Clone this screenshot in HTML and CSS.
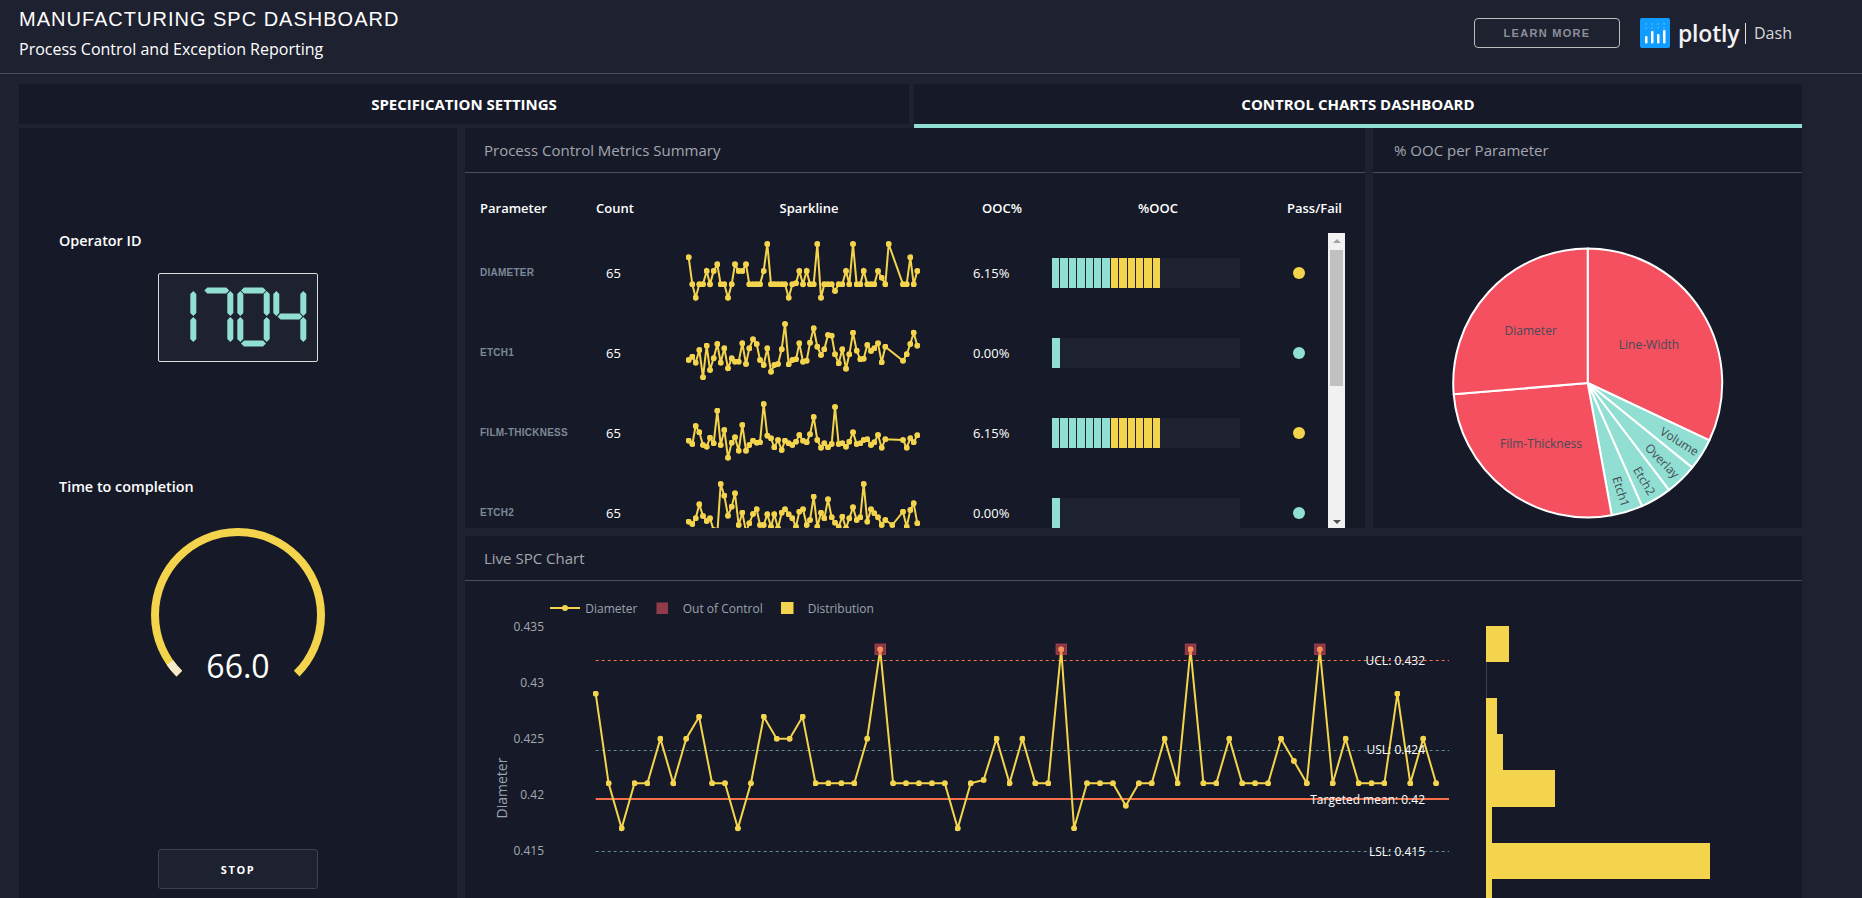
FILE: index.html
```html
<!DOCTYPE html>
<html lang="en">
<head>
<meta charset="utf-8">
<title>Manufacturing SPC Dashboard</title>
<link rel="stylesheet" href="styles.css">
</head>
<body>
<header class="banner">
  <div class="banner-text">
    <h1 class="banner-title">MANUFACTURING SPC DASHBOARD</h1>
    <p class="banner-sub">Process Control and Exception Reporting</p>
  </div>
  <div class="banner-actions">
    <button class="learn">LEARN MORE</button>
    <div class="logo">
      <svg class="logo-mark" width="30" height="30" viewBox="0 0 30 30">
        <rect width="30" height="30" rx="2" fill="#119dff"/>
        <g fill="#fff" opacity=".22"><circle cx="6" cy="6" r="1"/><circle cx="12" cy="6" r="1"/><circle cx="18" cy="6" r="1"/><circle cx="24" cy="6" r="1"/><circle cx="6" cy="10" r="1"/><circle cx="12" cy="10" r="1"/><circle cx="18" cy="10" r="1"/><circle cx="24" cy="10" r="1"/></g>
        <g fill="#fff"><rect x="5" y="18" width="2.5" height="7.5" rx="1"/><rect x="11" y="13" width="2.5" height="12.5" rx="1"/><rect x="17" y="16" width="2.5" height="9.5" rx="1"/><rect x="23" y="12" width="2.5" height="13.5" rx="1"/></g>
      </svg>
      <span class="logo-word">plotly</span>
      <span class="logo-sep"></span>
      <span class="logo-dash">Dash</span>
    </div>
  </div>
</header>

<nav class="tabs">
  <div class="tab">SPECIFICATION SETTINGS</div>
  <div class="tab tab-active">CONTROL CHARTS DASHBOARD</div>
</nav>

<main class="content">
  <aside class="side">
    <div class="side-label side-label-first">Operator ID</div>
    <div class="led">
      <svg width="158" height="87" viewBox="159 274 158 87" role="img" aria-label="1704">
        <title>1704</title>
        <defs>
          <polygon id="sv" points="0,0 3,3 3,22 0,25 -3,22 -3,3"/>
          <polygon id="sh" points="0,0 3,-3 22,-3 25,0 22,3 3,3"/>
        </defs>
        <g fill="#91dfd2">
          <use href="#sv" x="193.3" y="291"/><use href="#sv" x="193.3" y="317"/>
          <use href="#sh" x="204.3" y="290.5"/><use href="#sv" x="230.3" y="291"/><use href="#sv" x="230.3" y="317"/>
          <use href="#sv" x="240.3" y="291"/><use href="#sv" x="240.3" y="317"/><use href="#sv" x="266.7" y="291"/><use href="#sv" x="266.7" y="317"/><use href="#sh" x="241" y="290.5"/><use href="#sh" x="241" y="343.5"/>
          <use href="#sv" x="276.3" y="291"/><use href="#sv" x="303.3" y="291"/><use href="#sv" x="303.3" y="317"/><use href="#sh" x="277.5" y="316.5"/>
        </g>
      </svg>
    </div>
    <div class="side-label side-label-second">Time to completion</div>
    <svg class="gauge" width="180" height="170" viewBox="148 521 180 170">
      <path d="M179.31 674.69 A83 83 0 1 1 296.69 674.69" fill="none" stroke="#f4d44d" stroke-width="8"/>
      <path d="M179.31 674.69 A83 83 0 0 1 170 663.6" fill="none" stroke="#f8ebc9" stroke-width="8"/>
      <text class="gauge-value" x="238" y="679" text-anchor="middle">66.0</text>
    </svg>
    <button class="stop">STOP</button>
  </aside>

  <div class="board">
    <div class="board-top">
      <section class="panel panel-metrics">
        <h2 class="panel-title">Process Control Metrics Summary</h2>
        <div class="metric-table">
          <div class="metric-grid metric-head">
            <div class="h-param">Parameter</div>
            <div class="h-count">Count</div>
            <div class="h-spark">Sparkline</div>
            <div class="h-ooc">OOC%</div>
            <div class="h-bar">%OOC</div>
            <div class="h-pass">Pass/Fail</div>
          </div>
          <div class="metric-scroll">
            <div class="metric-rows">
              <div class="metric-grid metric-row">
                <div class="c-param">DIAMETER</div>
                <div class="c-count">65</div>
                <svg class="spark" width="322" height="80" viewBox="564 159 966 240"><polyline class="spark-line" marker-start="url(#sd)" marker-mid="url(#sd)" marker-end="url(#sd)" points="686,232 697,313 707,353 718,313 729,313 740,273 750,313 761,273 772,253 782,313 793,313 804,353 815,313 825,253 836,273 847,273 858,253 868,313 879,313 890,313 900,313 911,273 922,192 933,313 943,313 954,313 965,313 975,313 986,353 997,313 1008,310 1018,273 1029,313 1040,273 1050,313 1061,313 1072,192 1083,353 1093,313 1104,313 1115,313 1125,333 1136,313 1147,313 1158,273 1168,313 1179,192 1190,313 1201,313 1211,273 1222,313 1233,313 1243,313 1254,273 1265,293 1276,313 1286,192 1329,313 1340,313 1351,232 1361,313 1372,273"/><defs><marker id="sd" markerUnits="userSpaceOnUse" markerWidth="18" markerHeight="18" refX="9" refY="9" viewBox="0 0 18 18"><circle cx="9" cy="9" r="9" fill="#f4d44d"/></marker></defs></svg>
                <div class="c-ooc">6.15%</div>
                <div class="track"><i class="seg"></i><i class="seg"></i><i class="seg"></i><i class="seg"></i><i class="seg"></i><i class="seg"></i><i class="seg"></i><i class="seg seg-y"></i><i class="seg seg-y"></i><i class="seg seg-y"></i><i class="seg seg-y"></i><i class="seg seg-y"></i><i class="seg seg-y"></i></div>
                <div class="dot dot-y"></div>
              </div>
              <div class="metric-grid metric-row">
                <div class="c-param">ETCH1</div>
                <div class="c-count">65</div>
                <svg class="spark" width="322" height="80" viewBox="564 399 966 240"><polyline class="spark-line" marker-start="url(#sd)" marker-mid="url(#sd)" marker-end="url(#sd)" points="686,540 697,530 707,548 718,510 729,592 740,497 750,570 761,535 772,492 782,548 793,505 804,565 815,535 825,545 836,545 847,490 858,552 868,505 879,478 890,492 900,540 911,555 922,505 933,575 943,555 954,552 965,508 975,432 986,553 997,540 1008,538 1018,490 1029,545 1040,542 1050,488 1061,445 1072,500 1083,525 1093,508 1104,465 1115,467 1125,523 1136,550 1147,508 1158,566 1168,523 1179,458 1190,512 1201,538 1211,536 1222,495 1233,513 1243,505 1254,490 1265,547 1276,500 1329,542 1340,523 1351,492 1361,458 1372,497"/></svg>
                <div class="c-ooc">0.00%</div>
                <div class="track"><i class="seg seg-solo"></i></div>
                <div class="dot"></div>
              </div>
              <div class="metric-grid metric-row">
                <div class="c-param">FILM-THICKNESS</div>
                <div class="c-count">65</div>
                <svg class="spark" width="322" height="80" viewBox="564 639 966 240"><polyline class="spark-line" marker-start="url(#sd)" marker-mid="url(#sd)" marker-end="url(#sd)" points="686,782 697,792 707,738 718,757 729,795 740,800 750,773 761,790 772,692 782,795 793,750 804,833 815,788 825,772 836,812 847,735 858,812 868,795 879,782 890,788 900,787 911,672 922,767 933,775 943,802 954,780 965,810 975,782 986,790 997,795 1008,785 1018,765 1029,782 1040,787 1050,763 1061,711 1072,780 1083,803 1093,790 1104,802 1115,792 1125,681 1136,792 1147,790 1158,800 1168,785 1179,757 1190,792 1201,790 1211,780 1222,778 1233,795 1243,787 1254,765 1265,803 1276,778 1329,780 1340,803 1351,775 1361,787 1372,766"/></svg>
                <div class="c-ooc">6.15%</div>
                <div class="track"><i class="seg"></i><i class="seg"></i><i class="seg"></i><i class="seg"></i><i class="seg"></i><i class="seg"></i><i class="seg"></i><i class="seg seg-y"></i><i class="seg seg-y"></i><i class="seg seg-y"></i><i class="seg seg-y"></i><i class="seg seg-y"></i><i class="seg seg-y"></i></div>
                <div class="dot dot-y"></div>
              </div>
              <div class="metric-grid metric-row">
                <div class="c-param">ETCH2</div>
                <div class="c-count">65</div>
                <svg class="spark" width="322" height="80" viewBox="564 879 966 240"><polyline class="spark-line" marker-start="url(#sd)" marker-mid="url(#sd)" marker-end="url(#sd)" points="686,1025 697,1032 707,1015 718,973 729,1008 740,1023 750,1015 761,1050 772,1060 782,912 793,947 804,1007 815,980 825,940 836,1035 847,998 858,1055 868,1030 879,1002 890,988 900,1035 911,1035 922,1003 933,1040 943,1003 954,1045 965,998 975,988 986,1003 997,1015 1008,1040 1018,995 1029,988 1040,1035 1050,1020 1061,950 1072,1040 1083,998 1093,1015 1104,958 1115,1012 1125,1028 1136,1040 1147,1010 1158,1045 1168,1015 1179,982 1190,1020 1201,1012 1211,912 1222,1025 1233,988 1243,1000 1254,1012 1265,1035 1276,1020 1297,1035 1329,995 1340,1040 1351,990 1361,970 1372,1030"/></svg>
                <div class="c-ooc">0.00%</div>
                <div class="track"><i class="seg seg-solo"></i></div>
                <div class="dot"></div>
              </div>
            </div>
            <div class="scrollbar">
              <span class="sb-up"></span>
              <span class="sb-thumb"></span>
              <span class="sb-down"></span>
            </div>
          </div>
        </div>
      </section>

      <section class="panel panel-pie">
        <h2 class="panel-title panel-title-pie">% OOC per Parameter</h2>
        <svg class="pie" width="429" height="355" viewBox="1373 173 429 355">
          <g stroke="#fff" stroke-width="2" stroke-linejoin="round">
            <path fill="#f45060" d="M1587.7 383 L1587.7 248.5 A134.5 134.5 0 0 1 1709.4 440.3 Z"/>
            <path fill="#91dfd2" d="M1587.7 383 L1709.4 440.3 A134.5 134.5 0 0 1 1692.2 467.6 Z"/>
            <path fill="#91dfd2" d="M1587.7 383 L1692.2 467.6 A134.5 134.5 0 0 1 1669 490.1 Z"/>
            <path fill="#91dfd2" d="M1587.7 383 L1669 490.1 A134.5 134.5 0 0 1 1642 506.1 Z"/>
            <path fill="#91dfd2" d="M1587.7 383 L1642 506.1 A134.5 134.5 0 0 1 1611.7 515.3 Z"/>
            <path fill="#f45060" d="M1587.7 383 L1611.7 515.3 A134.5 134.5 0 0 1 1453.7 394.3 Z"/>
            <path fill="#f45060" d="M1587.7 383 L1453.7 394.3 A134.5 134.5 0 0 1 1587.7 248.5 Z"/>
          </g>
          <g class="pie-label" text-anchor="middle">
            <text x="1649" y="349">Line-Width</text>
            <text x="1530.7" y="335">Diameter</text>
            <text x="1541" y="448">Film-Thickness</text>
            <text transform="translate(1679.3 441.7) rotate(32)" y="4">Volume</text>
            <text transform="translate(1662 461) rotate(46)" y="4">Overlay</text>
            <text transform="translate(1644 481) rotate(59.5)" y="4">Etch2</text>
            <text transform="translate(1620.7 491.7) rotate(73)" y="4">Etch1</text>
          </g>
        </svg>
      </section>
    </div>

    <section class="panel panel-live">
      <h2 class="panel-title">Live SPC Chart</h2>
      <svg class="live" width="1337" height="317" viewBox="465 581 1337 317">
        <defs><marker id="md" markerUnits="userSpaceOnUse" markerWidth="6" markerHeight="6" refX="3" refY="3" viewBox="0 0 6 6"><circle cx="3" cy="3" r="3" fill="#f4d44d"/></marker></defs>
        <g class="legend">
          <line x1="550" y1="608" x2="580" y2="608" stroke="#f4d44d" stroke-width="2"/>
          <circle cx="565" cy="608" r="3" fill="#f4d44d"/>
          <text x="585.3" y="613">Diameter</text>
          <rect x="656.5" y="602.5" width="11.5" height="11.5" fill="#913a4a"/>
          <text x="682.7" y="613">Out of Control</text>
          <rect x="781" y="602" width="12.5" height="12" fill="#f4d44d"/>
          <text x="807.7" y="613">Distribution</text>
        </g>
        <g class="tick" text-anchor="end">
          <text x="544" y="631">0.435</text>
          <text x="544" y="687">0.43</text>
          <text x="544" y="743">0.425</text>
          <text x="544" y="799">0.42</text>
          <text x="544" y="855">0.415</text>
        </g>
        <text class="axis-title" transform="translate(507 788) rotate(-90)" text-anchor="middle">Diameter</text>
        <g fill="none">
          <line x1="595.7" y1="660.5" x2="1449" y2="660.5" stroke="#f8704a" stroke-dasharray="3 3"/>
          <line x1="595.7" y1="750.5" x2="1449" y2="750.5" stroke="#91dfd2" stroke-opacity=".6" stroke-dasharray="3 3"/>
          <line x1="595.7" y1="851.5" x2="1449" y2="851.5" stroke="#91dfd2" stroke-opacity=".6" stroke-dasharray="3 3"/>
          <line x1="595.7" y1="799" x2="1449" y2="799" stroke="#f8704a" stroke-width="2"/>
          <polyline stroke="#f4d44d" stroke-width="2" marker-start="url(#md)" marker-mid="url(#md)" marker-end="url(#md)" points="595.7,693.7 608.6,783.3 621.6,828.3 634.5,783.3 647.4,783.3 660.4,738.7 673.3,783.3 686.2,738.7 699.1,716.7 712.1,783.3 725,783.3 737.9,828.3 750.9,783.3 763.8,716.7 776.7,738.7 789.6,738.7 802.6,716.7 815.5,783.3 828.4,783.3 841.4,783.3 854.3,783.3 867.2,738.7 880.2,649.3 893.1,783.3 906,783.3 918.9,783.3 931.9,783.3 944.8,783.3 957.7,828.3 970.7,783.3 983.6,780 996.5,738.7 1009.5,783.3 1022.4,738.7 1035.3,783.3 1048.2,783.3 1061.2,649.3 1074.1,828.3 1087,783.3 1100,783.3 1112.9,783.3 1125.8,805.7 1138.8,783.3 1151.7,783.3 1164.6,738.7 1177.5,783.3 1190.5,649.3 1203.4,783.3 1216.3,783.3 1229.3,738.7 1242.2,783.3 1255.1,783.3 1268.1,783.3 1281,738.7 1293.9,761 1306.8,783.3 1319.8,649.3 1332.7,783.3 1345.6,738.7 1358.6,783.3 1371.5,783.3 1384.4,783.3 1397.4,693.7 1410.3,783.3 1423.2,738.7 1436.1,783.3"/>
        </g>
        <g fill="#f45060" fill-opacity=".5" stroke="#f45060" stroke-opacity=".5">
          <rect x="875" y="644" width="10.5" height="10.5"/>
          <rect x="1056" y="644" width="10.5" height="10.5"/>
          <rect x="1185.3" y="644" width="10.5" height="10.5"/>
          <rect x="1314.6" y="644" width="10.5" height="10.5"/>
        </g>
        <g class="limit" text-anchor="end">
          <text x="1425" y="664.5">UCL: 0.432</text>
          <text x="1425" y="754">USL: 0.424</text>
          <text x="1425" y="804">Targeted mean: 0.42</text>
          <text x="1425" y="855.5">LSL: 0.415</text>
        </g>
        <line x1="1486.5" y1="662" x2="1486.5" y2="698" stroke="#3c4152"/>
        <g fill="#f4d44d">
          <rect x="1486" y="626" width="23" height="36"/>
          <rect x="1486" y="698" width="11" height="36"/>
          <rect x="1486" y="734" width="17" height="36"/>
          <rect x="1486" y="770" width="69" height="37"/>
          <rect x="1486" y="807" width="6" height="36"/>
          <rect x="1486" y="843" width="224" height="36"/>
          <rect x="1486" y="879" width="6" height="19"/>
        </g>
      </svg>
    </section>
  </div>
</main>
</body>
</html>
```
FILE: styles.css
```css
* { box-sizing: border-box; }
html, body { margin: 0; height: 100%; overflow: hidden; }
body {
  background: #1e2130;
  color: #fff;
  font-family: "Open Sans", "Liberation Sans", sans-serif;
  display: flex;
  flex-direction: column;
}
.banner {
  flex: none;
  height: 74px;
  border-bottom: 1px solid #4b4e5a;
  padding: 0 60px 0 19px;
  display: flex;
  justify-content: space-between;
}
.banner-title {
  margin: 8px 0 0;
  font: 400 20px/23px "Liberation Sans", Arial, sans-serif;
  letter-spacing: 1px;
}
.banner-sub { margin: 7px 0 0; font-size: 16px; line-height: 22px; }
.banner-actions { display: flex; align-items: flex-start; padding-top: 18px; }
.learn {
  width: 146px;
  height: 30px;
  background: transparent;
  border: 1px solid #bbb;
  border-radius: 4px;
  color: #8c8f99;
  font: 700 11px/1 "Liberation Sans", Arial, sans-serif;
  letter-spacing: 1.3px;
}
.logo { display: flex; align-items: center; height: 30px; margin-left: 20px; width: 162px; }
.logo-mark { flex: none; }
.logo-word { flex: none; width: 60px; margin-left: 8px; font: 600 23px/30px "Open Sans", sans-serif; letter-spacing: -.2px; color: #f2f2f2; }
.logo-sep { flex: none; width: 1px; height: 21px; background: #e0e0e0; margin-left: 7px; }
.logo-dash { flex: none; margin-left: 8px; font-size: 16px; color: #d8d8d8; }

.tabs {
  flex: none;
  margin: 10px 0 0 19px;
  display: grid;
  grid-template-columns: 890px 888px;
  column-gap: 5px;
}
.tab {
  height: 44px;
  background: #161a28;
  border-bottom: 4px solid #1e2130;
  text-align: center;
  font-size: 15px;
  font-weight: 700;
  line-height: 40px;
}
.tab-active { border-bottom-color: #91dfd2; }

.content {
  flex: 1;
  min-height: 0;
  margin-left: 19px;
  width: 1783px;
  display: grid;
  grid-template-columns: 438px 1337px;
  column-gap: 8px;
}
.side {
  background: #161a28;
  display: flex;
  flex-direction: column;
  padding-left: 40px;
  align-items: flex-start;
}
.side-label { font-size: 14.4px; font-weight: 600; line-height: 20px; }
.side-label-first { margin-top: 103px; }
.side-label-second { margin-top: 115px; }
.led, .stop, .gauge { align-self: center; margin-left: -40px; }
.led {
  margin-top: 22px;
  width: 160px;
  height: 89px;
  background: #1e2130;
  border: 1px solid #ddd;
  border-radius: 2px;
}
.led svg, .gauge, .spark, .pie, .live { display: block; }
.gauge { margin-top: 23px; }
.gauge-value { font-size: 32px; fill: #fff; }
.stop {
  margin-top: 159px;
  width: 160px;
  height: 40px;
  padding-bottom: 1px;
  background: #1e2130;
  border: 1px solid #3c4152;
  border-radius: 3px;
  color: #fff;
  font: 700 11px/1 "Open Sans", sans-serif;
  letter-spacing: 1.6px;
}

.board { min-width: 0; display: flex; flex-direction: column; row-gap: 8px; min-height: 0; }
.board-top { flex: none; height: 400px; display: grid; grid-template-columns: 900px 429px; column-gap: 8px; }
.panel { background: #161a28; min-width: 0; overflow: hidden; }
.panel-live { flex: 1; min-height: 0; }
.panel-title {
  margin: 0;
  height: 45px;
  padding-left: 19px;
  border-bottom: 1px solid #4b4e5a;
  color: #a3a6ae;
  font-size: 15px;
  font-weight: 400;
  line-height: 44px;
}
.panel-title-pie { padding-left: 21px; }

.metric-table { padding-left: 15px; }
.metric-grid {
  display: grid;
  grid-template-columns: 110px 58px 322px 82px 188px 1fr;
  align-items: center;
}
.metric-head {
  height: 60px;
  padding-top: 10px;
  font-size: 13px;
  font-weight: 600;
}
.h-count { padding-left: 6px; }
.h-spark { text-align: center; }
.h-ooc { padding-left: 12px; }
.h-bar { padding-left: 86px; }
.h-pass { padding-left: 47px; white-space: nowrap; }
.metric-scroll { display: flex; height: 295px; overflow: hidden; }
.metric-rows { width: 848px; flex: none; }
.metric-row { height: 80px; }
.c-param {
  font: 700 10px/1 "Liberation Sans", Arial, sans-serif;
  letter-spacing: .25px;
  color: #7e8798;
  margin-top: -1px;
}
.c-count { padding-left: 16px; font-size: 13px; margin-top: -1px; }
.c-ooc { padding-left: 3px; font-size: 13px; margin-top: -1px; }
.spark-line { fill: none; stroke: #f4d44d; stroke-width: 6; }
.track { display: flex; column-gap: 1px; height: 30px; background: #1e2130; }
.seg { display: block; width: 7.4px; background: #91dfd2; }
.seg-y { background: #f4d44d; }
.seg-solo { width: 8px; }
.dot { width: 12px; height: 12px; margin-left: 53px; border-radius: 50%; background: #91dfd2; }
.dot-y { background: #f4d44d; }

.scrollbar {
  flex: none;
  width: 17px;
  background: #f1f1f1;
  display: flex;
  flex-direction: column;
  align-items: center;
}
.sb-up {
  flex: none;
  margin-top: 6px;
  width: 0; height: 0;
  border-left: 4px solid transparent;
  border-right: 4px solid transparent;
  border-bottom: 4px solid #a3a3a3;
}
.sb-thumb { flex: none; margin-top: 7px; width: 13px; height: 136px; background: #c1c1c1; }
.sb-down {
  flex: none;
  margin-top: 134px;
  width: 0; height: 0;
  border-left: 4px solid transparent;
  border-right: 4px solid transparent;
  border-top: 4px solid #505050;
}

.pie-label text { font-size: 12px; fill: #444b55; }
.legend text { font-size: 12px; fill: #9ba3ad; }
.tick text { font-size: 12px; fill: #a4a8b0; }
.axis-title { font-size: 14px; fill: #9ba3ad; }
.limit text { font-size: 12px; fill: #fff; }
```
